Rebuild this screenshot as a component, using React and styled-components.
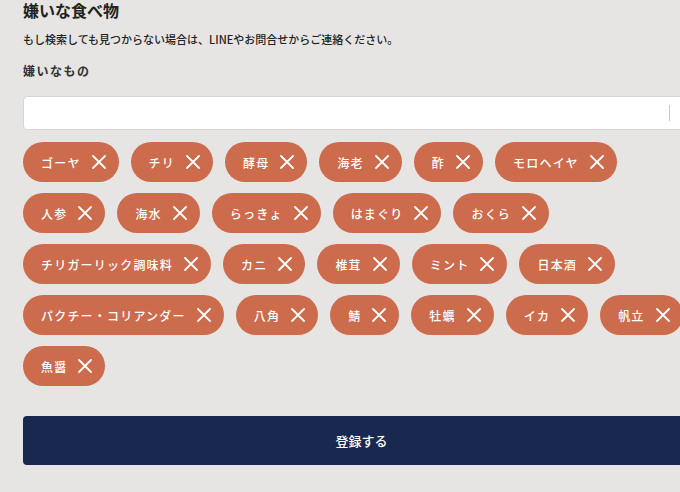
import React, { useState } from 'react';
import styled, { createGlobalStyle } from 'styled-components';

const GlobalStyle = createGlobalStyle`
html, body {
    margin: 0;
    padding: 0;
    background: #e6e5e3;
    overflow: hidden;
}
body {
    font-family: "Noto Sans CJK JP", "Noto Sans", sans-serif;
    color: #222;
}
`;

const initialFoods = [
    'ゴーヤ', 'チリ', '酵母', '海老', '酢', 'モロヘイヤ',
    '人参', '海水', 'らっきょ', 'はまぐり', 'おくら',
    'チリガーリック調味料', 'カニ', '椎茸', 'ミント', '日本酒',
    'パクチー・コリアンダー', '八角', '鯖', '牡蠣', 'イカ', '帆立',
    '魚醤',
];

const CloseIcon = () => (
    <svg width="14" height="14" viewBox="0 0 14 14" fill="none">
        <path d="M1 1L13 13M13 1L1 13" stroke="#fff" strokeWidth="1.8" strokeLinecap="round" />
    </svg>
);

const App = () => {
    const [foods, setFoods] = useState(initialFoods);

    const removeFood = (name) => {
        setFoods(foods.filter(f => f !== name));
    };

    return (
        <Page>
            <GlobalStyle />
            <Title>嫌いな食べ物</Title>
            <Note>もし検索しても見つからない場合は、LINEやお問合せからご連絡ください。</Note>
            <Label>嫌いなもの</Label>
            <SelectBox>
                <SearchInput type="text" />
                <Separator />
                <IndicatorSpace />
            </SelectBox>
            <TagList>
                {foods.map(food => (
                    <Tag key={food}>
                        <TagText>{food}</TagText>
                        <RemoveButton onClick={() => removeFood(food)}>
                            <CloseIcon />
                        </RemoveButton>
                    </Tag>
                ))}
            </TagList>
            <SubmitButton>登録する</SubmitButton>
        </Page>
    );
};

export default App;

const Page = styled.div`
width: 677px;
padding-top: 1px;
padding-left: 23px;
padding-bottom: 30px;
`;

const Title = styled.h2`
margin: 0;
font-size: 16px;
line-height: 19px;
font-weight: 700;
color: #222;
`;

const Note = styled.p`
margin: 11px 0 0;
font-size: 11px;
line-height: 17px;
font-weight: 500;
color: #222;
`;

const Label = styled.div`
margin-top: 14px;
font-size: 12px;
line-height: 18px;
font-weight: 700;
letter-spacing: 1.5px;
color: #333;
`;

const SelectBox = styled.div`
margin-top: 16px;
height: 34px;
box-sizing: border-box;
background: #fff;
border: 1px solid #d6d5d3;
border-radius: 4px;
display: flex;
align-items: center;
`;

const SearchInput = styled.input`
flex: 1;
height: 100%;
border: none;
outline: none;
background: transparent;
padding: 0 10px;
font-family: inherit;
font-size: 13px;
`;

const Separator = styled.span`
width: 1px;
height: 16px;
background: #c8c8c8;
`;

const IndicatorSpace = styled.span`
width: 29px;
`;

const TagList = styled.div`
margin-top: 12px;
display: flex;
flex-wrap: wrap;
column-gap: 12px;
row-gap: 11px;
`;

const Tag = styled.div`
height: 40px;
box-sizing: border-box;
padding: 0 13px 0 18px;
border-radius: 20px;
background: #cd6b4d;
display: flex;
align-items: center;
gap: 11px;
color: #fff;
`;

const TagText = styled.span`
font-size: 12px;
letter-spacing: 1.2px;
font-weight: 500;
white-space: nowrap;
`;

const RemoveButton = styled.button`
border: none;
background: none;
padding: 0;
width: 14px;
height: 14px;
display: flex;
cursor: pointer;
`;

const SubmitButton = styled.button`
margin-top: 30px;
width: 100%;
height: 49px;
border: none;
border-radius: 4px;
background: #19284f;
color: #fff;
font-family: inherit;
font-size: 13px;
font-weight: 500;
cursor: pointer;
`;
